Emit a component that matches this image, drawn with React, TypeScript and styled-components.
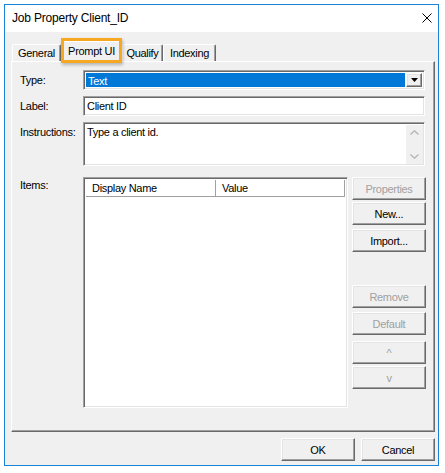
import styled, { createGlobalStyle, css } from "styled-components";

const GlobalStyle = createGlobalStyle`
  html, body {
    margin: 0;
    padding: 0;
    background: #fff;
  }
  body {
    font-family: "Liberation Sans", Arial, sans-serif;
    font-size: 11px;
    letter-spacing: -0.3px;
    color: #000;
  }
`;

const raised = css`
  border: 1px solid;
  border-color: #fff #696969 #696969 #fff;
  box-shadow: inset -1px -1px 0 #a0a0a0, inset 1px 1px 0 #e3e3e3;
`;

const sunken = css`
  border: 1px solid;
  border-color: #a0a0a0 #fff #fff #a0a0a0;
  box-shadow: inset 1px 1px 0 #696969, inset -1px -1px 0 #e3e3e3;
`;

const Page = styled.div`
  padding: 4px;
`;

const Window = styled.div`
  width: 435px;
  height: 462px;
  box-sizing: border-box;
  border: 1px solid #1883d7;
  background: #f0f0f0;
  display: flex;
  flex-direction: column;
`;

const TitleBar = styled.div`
  height: 27px;
  flex: none;
  background: #fff;
  display: flex;
  align-items: center;
  justify-content: space-between;
  padding: 0 6px 1px 7px;
  box-sizing: border-box;
`;

const Title = styled.span`
  font-size: 12px;
  letter-spacing: -0.2px;
`;

const Body = styled.div`
  flex: 1;
  display: flex;
  flex-direction: column;
  padding: 9px 3px 4px 6px;
`;

const TabStrip = styled.div`
  height: 20px;
  display: flex;
  align-items: flex-end;
  padding-left: 1px;
  position: relative;
`;

const Tab = styled.div<{ $active?: boolean; $w: number }>`
  width: ${(p) => p.$w}px;
  height: ${(p) => (p.$active ? 21 : 17)}px;
  box-sizing: border-box;
  border: 1px solid;
  border-bottom: none;
  border-color: #fff #696969 transparent #fff;
  border-radius: 2px 2px 0 0;
  box-shadow: inset -1px 0 0 #a0a0a0;
  background: #f0f0f0;
  display: flex;
  align-items: center;
  justify-content: center;
  position: relative;
  ${(p) =>
    p.$active &&
    css`
      z-index: 1;
      margin-bottom: -1px;
      padding-bottom: 3px;
    `}
`;

const Highlight = styled.div`
  position: absolute;
  left: 50px;
  top: -3px;
  width: 61px;
  height: 25px;
  box-sizing: border-box;
  border: 3px solid #f7a823;
  box-shadow: 1px 2px 3px rgba(0, 0, 0, 0.25);
  z-index: 2;
`;

const Panel = styled.div`
  height: 371px;
  box-sizing: border-box;
  border: 1px solid;
  border-color: #fff #696969 #696969 #fff;
  box-shadow: inset -1px -1px 0 #a0a0a0;
  padding: 8px 9px 0 8px;
  display: flex;
  flex-direction: column;
`;

const Row = styled.div<{ $mb?: number; $mr?: number }>`
  display: flex;
  margin-bottom: ${(p) => p.$mb ?? 0}px;
  margin-right: ${(p) => p.$mr ?? 0}px;
`;

const Label = styled.div<{ $mt?: number }>`
  width: 63px;
  flex: none;
  line-height: 20px;
  margin-top: ${(p) => p.$mt ?? 0}px;
`;

const Combo = styled.div`
  flex: 1;
  height: 20px;
  box-sizing: border-box;
  ${sunken};
  background: #fff;
  display: flex;
  padding: 2px;
  gap: 1px;
`;

const ComboValue = styled.div`
  flex: 1;
  background: #0078d7;
  color: #fff;
  line-height: 16px;
  padding-left: 2px;
`;

const DropButton = styled.div`
  width: 16px;
  box-sizing: border-box;
  ${raised};
  background: #f0f0f0;
  display: flex;
  align-items: center;
  justify-content: center;
`;

const TextBox = styled.div<{ $h: number }>`
  flex: 1;
  height: ${(p) => p.$h}px;
  box-sizing: border-box;
  ${sunken};
  background: #fff;
  display: flex;
`;

const TextValue = styled.div`
  flex: 1;
  padding: 2px 3px;
  line-height: 14px;
`;

const ScrollBar = styled.div`
  width: 17px;
  margin: 2px 1px 1px 0;
  background: #f0f0f0;
  display: flex;
  flex-direction: column;
  justify-content: space-between;
  align-items: center;
  padding: 5px 0;
  box-sizing: border-box;
`;

const List = styled.div`
  width: 265px;
  height: 231px;
  box-sizing: border-box;
  ${sunken};
  background: #fff;
  padding: 2px;
`;

const ListHeader = styled.div`
  display: flex;
  height: 16px;
  border-bottom: 1px solid #a0a0a0;
`;

const HeaderCell = styled.div<{ $w: number }>`
  width: ${(p) => p.$w}px;
  box-sizing: border-box;
  border-right: 1px solid #a0a0a0;
  padding-left: 6px;
  line-height: 16px;
`;

const ButtonColumn = styled.div`
  display: flex;
  flex-direction: column;
  margin-left: 4px;
`;

const Button = styled.button<{ $mt?: number }>`
  width: 74px;
  height: 23px;
  box-sizing: border-box;
  ${raised};
  background: #f0f0f0;
  font: inherit;
  letter-spacing: inherit;
  color: ${(p) => (p.disabled ? "#a0a0a0" : "#000")};
  margin-top: ${(p) => p.$mt ?? 0}px;
  padding: 0;
`;

const Footer = styled.div`
  display: flex;
  justify-content: flex-end;
  gap: 6px;
  margin-top: 6px;
`;

const CloseIcon = () => (
  <svg width="10" height="10" viewBox="0 0 10 10">
    <path d="M0.5 0.5 L9.5 9.5 M9.5 0.5 L0.5 9.5" stroke="#000" strokeWidth="1" />
  </svg>
);

const DownTriangle = () => (
  <svg width="7" height="4" viewBox="0 0 7 4">
    <polygon points="0,0 7,0 3.5,4" fill="#000" />
  </svg>
);

const Chevron = ({ up }: { up?: boolean }) => (
  <svg width="9" height="5" viewBox="0 0 9 5">
    <path
      d={up ? "M0.5 4.5 L4.5 0.8 L8.5 4.5" : "M0.5 0.5 L4.5 4.2 L8.5 0.5"}
      fill="none"
      stroke="#b4b4b4"
      strokeWidth="1.3"
    />
  </svg>
);

const tabs = [
  { name: "General", w: 49 },
  { name: "Prompt UI", w: 61, active: true },
  { name: "Qualify", w: 41 },
  { name: "Indexing", w: 53 },
];

const App = () => {
  return (
    <>
      <GlobalStyle />
      <Page>
        <Window>
          <TitleBar>
            <Title>Job Property Client_ID</Title>
            <CloseIcon />
          </TitleBar>
          <Body>
            <TabStrip>
              {tabs.map((t) => (
                <Tab key={t.name} $w={t.w} $active={t.active}>
                  {t.name}
                </Tab>
              ))}
              <Highlight />
            </TabStrip>
            <Panel>
              <Row $mb={6}>
                <Label>Type:</Label>
                <Combo>
                  <ComboValue>Text</ComboValue>
                  <DropButton>
                    <DownTriangle />
                  </DropButton>
                </Combo>
              </Row>
              <Row $mb={6}>
                <Label>Label:</Label>
                <TextBox $h={20}>
                  <TextValue>Client ID</TextValue>
                </TextBox>
              </Row>
              <Row $mb={11}>
                <Label>Instructions:</Label>
                <TextBox $h={44}>
                  <TextValue>Type a client id.</TextValue>
                  <ScrollBar>
                    <Chevron up />
                    <Chevron />
                  </ScrollBar>
                </TextBox>
              </Row>
              <Row $mr={-2}>
                <Label $mt={-2}>Items:</Label>
                <List>
                  <ListHeader>
                    <HeaderCell $w={131}>Display Name</HeaderCell>
                    <HeaderCell $w={130}>Value</HeaderCell>
                  </ListHeader>
                </List>
                <ButtonColumn>
                  <Button disabled>Properties</Button>
                  <Button $mt={2}>New...</Button>
                  <Button $mt={4}>Import...</Button>
                  <Button disabled $mt={33}>
                    Remove
                  </Button>
                  <Button disabled $mt={4}>
                    Default
                  </Button>
                  <Button disabled $mt={6}>
                    ^
                  </Button>
                  <Button disabled $mt={2}>
                    v
                  </Button>
                </ButtonColumn>
              </Row>
            </Panel>
            <Footer>
              <Button>OK</Button>
              <Button>Cancel</Button>
            </Footer>
          </Body>
        </Window>
      </Page>
    </>
  );
};

export default App;
